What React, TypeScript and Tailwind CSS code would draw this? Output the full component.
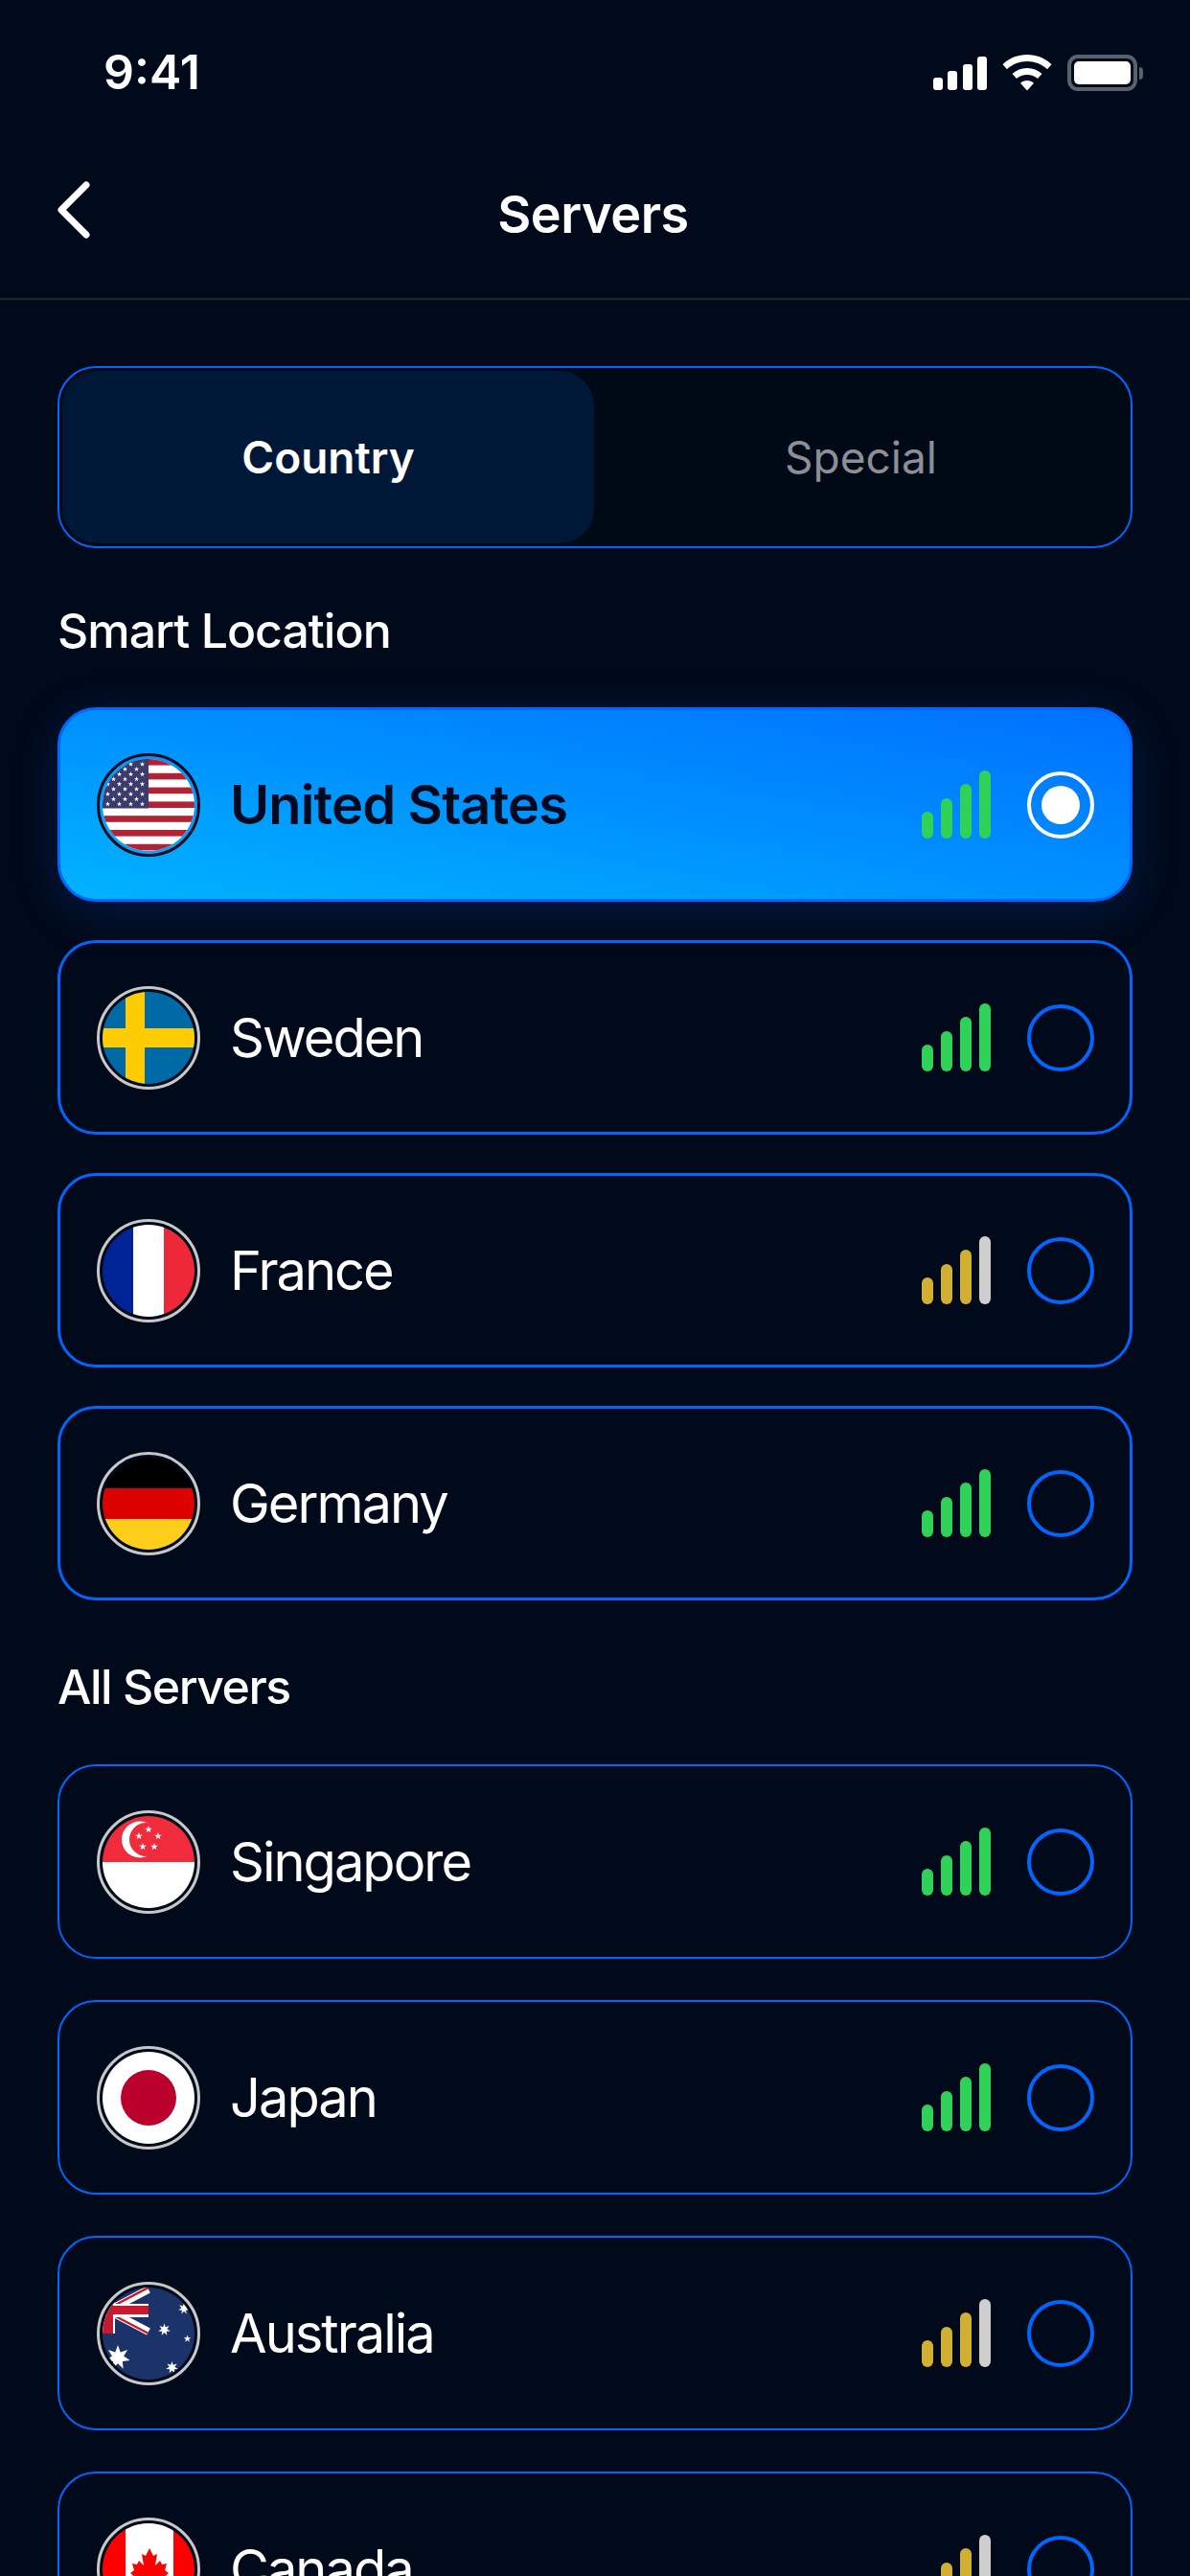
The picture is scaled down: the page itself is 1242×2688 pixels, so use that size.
import React from 'react';

const star = (cx: number, cy: number, r: number, points = 5, inner = 0.4) => {
  const out: string[] = [];
  for (let i = 0; i < points * 2; i++) {
    const rad = i % 2 === 0 ? r : r * inner;
    const a = (Math.PI * i) / points - Math.PI / 2;
    out.push(`${(cx + rad * Math.cos(a)).toFixed(2)},${(cy + rad * Math.sin(a)).toFixed(2)}`);
  }
  return out.join(' ');
};

const UsFlag = () => {
  const stripes = Array.from({ length: 13 }, (_, i) => i);
  const stars: [number, number][] = [];
  for (let row = 0; row < 9; row++) {
    const count = row % 2 === 0 ? 4 : 3;
    for (let col = 0; col < count; col++) {
      stars.push([(row % 2 === 0 ? 5.5 : 11.5) + col * 12, 5.4 + row * 5.2]);
    }
  }
  return (
    <svg viewBox="0 0 96 96" className="w-full h-full">
      <rect width="96" height="96" fill="#fff" />
      {stripes.map((i) =>
        i % 2 === 0 ? <rect key={i} x="0" y={i * 7.4} width="96" height="6.6" fill="#b22234" /> : null
      )}
      <rect width="48" height="51.5" fill="#3c3b6e" />
      {stars.map(([x, y], i) => (
        <polygon key={i} points={star(x, y, 2.7)} fill="#fff" />
      ))}
    </svg>
  );
};

const SwedenFlag = () => (
  <svg viewBox="0 0 96 96" className="w-full h-full">
    <rect width="96" height="96" fill="#006aa7" />
    <rect x="24" width="20" height="96" fill="#fecc00" />
    <rect y="38" width="96" height="20" fill="#fecc00" />
  </svg>
);

const FranceFlag = () => (
  <svg viewBox="0 0 96 96" className="w-full h-full">
    <rect width="32" height="96" fill="#002395" />
    <rect x="32" width="32" height="96" fill="#fff" />
    <rect x="64" width="32" height="96" fill="#ed2939" />
  </svg>
);

const GermanyFlag = () => (
  <svg viewBox="0 0 96 96" className="w-full h-full">
    <rect width="96" height="32" fill="#000" />
    <rect y="32" width="96" height="32" fill="#dd0000" />
    <rect y="64" width="96" height="32" fill="#ffce1a" />
  </svg>
);

const SingaporeFlag = () => (
  <svg viewBox="0 0 96 96" className="w-full h-full">
    <rect width="96" height="48" fill="#ef2b3c" />
    <rect y="48" width="96" height="48" fill="#fff" />
    <circle cx="39" cy="24.5" r="19" fill="#fff" />
    <circle cx="45.5" cy="24.5" r="17.5" fill="#ef2b3c" />
    <polygon points={star(48, 14, 4)} fill="#fff" />
    <polygon points={star(38, 21, 4)} fill="#fff" />
    <polygon points={star(58, 21, 4)} fill="#fff" />
    <polygon points={star(42, 32, 4)} fill="#fff" />
    <polygon points={star(54, 32, 4)} fill="#fff" />
  </svg>
);

const JapanFlag = () => (
  <svg viewBox="0 0 96 96" className="w-full h-full">
    <rect width="96" height="96" fill="#fff" />
    <circle cx="48" cy="48" r="29" fill="#bc002d" />
  </svg>
);

const AustraliaFlag = () => (
  <svg viewBox="0 0 96 96" className="w-full h-full">
    <rect width="96" height="96" fill="#1b3369" />
    {/* canton is cropped by the circle, the cross sits near the left edge */}
    <path d="M6 24 L48 2 M6 24 L48 46" stroke="#fff" strokeWidth="8" />
    <path d="M6 22 L48 0 M6 26 L48 48" stroke="#c8192e" strokeWidth="2.5" />
    <rect x="0" y="0" width="13" height="48" fill="#fff" />
    <rect x="0" y="17" width="48" height="14" fill="#fff" />
    <rect x="0" y="0" width="11" height="48" fill="#c8192e" />
    <rect x="0" y="19" width="48" height="9" fill="#c8192e" />
    <polygon points={star(16, 73, 13, 7, 0.48)} fill="#fff" />
    <polygon points={star(64.5, 44, 6.5, 7, 0.45)} fill="#fff" />
    <polygon points={star(85, 22, 6, 7, 0.45)} fill="#fff" />
    <polygon points={star(88.5, 53.5, 4, 5)} fill="#fff" />
    <polygon points={star(72.5, 83.5, 6.5, 7, 0.45)} fill="#fff" />
  </svg>
);

const CanadaFlag = () => (
  <svg viewBox="0 0 96 96" className="w-full h-full">
    <rect width="96" height="96" fill="#ff0000" />
    <rect x="24" width="50" height="96" fill="#fff" />
    <path
      d="M49 26 L53 34 L57 32 L55 44 L60 39 L62 43 L67 42 L65 49 L69 52 L60 60 L62 65 L50 63 L50 72 L48 72 L48 63 L36 65 L38 60 L29 52 L33 49 L31 42 L36 43 L38 39 L43 44 L41 32 L45 34 Z"
      fill="#ff0000"
    />
  </svg>
);

const SignalBars = ({ tone }: { tone: 'good' | 'fair' }) => {
  const heights = ['h-[28px]', 'h-[42px]', 'h-[57px]', 'h-[71px]'];
  return (
    <div className="flex items-end gap-[8px]">
      {heights.map((h, i) => (
        <div
          key={h}
          className={`w-[12px] rounded-full ${h} ${
            tone === 'good' ? 'bg-[#30d158]' : i === 3 ? 'bg-[#cfcfcf]' : 'bg-[#d0af33]'
          }`}
        />
      ))}
    </div>
  );
};

interface ServerRowProps {
  name: string;
  flag: React.ReactNode;
  tone: 'good' | 'fair';
  selected?: boolean;
  thin?: boolean;
}

const ServerRow: React.FC<ServerRowProps> = ({ name, flag, tone, selected, thin }) => (
  <div
    className={`flex items-center h-[203px] shrink-0 rounded-[40px] border-[#0066ff] ${
      thin ? 'border-2 pl-[39px] pr-[38px]' : 'border-[3px] pl-[38px] pr-[37px]'
    } ${
      selected
        ? 'bg-gradient-to-tr from-[#00b4ff] via-[#0090ff] to-[#0070ff] shadow-[0_10px_50px_rgba(0,90,255,0.2)]'
        : ''
    }`}
  >
    <div
      className={`w-[108px] h-[108px] shrink-0 rounded-full border-[3px] p-[3px] ${
        selected ? 'border-[#000a1c]' : 'border-[#c8c8c8]'
      }`}
    >
      <div className="w-full h-full rounded-full overflow-hidden">{flag}</div>
    </div>
    <span
      className={`ml-[31px] flex-1 text-[56px] leading-none ${
        selected ? 'font-semibold tracking-[-0.85px] text-[#000a1e]' : 'font-normal tracking-[-2px] text-white'
      }`}
    >
      {name}
    </span>
    <SignalBars tone={tone} />
    <div
      className={`ml-[38px] w-[70px] h-[70px] rounded-full border-[4px] flex items-center justify-center ${
        selected ? 'border-white' : 'border-[#0066ff]'
      }`}
    >
      {selected && <div className="w-[40px] h-[40px] rounded-full bg-white" />}
    </div>
  </div>
);

const StatusBar = () => (
  <div className="h-[150px] flex items-start justify-between pt-[52px] pl-[108px] pr-[49px]">
    <span className="text-[50px] leading-[46px] font-semibold text-white">9:41</span>
    <div className="flex items-center gap-[16px] mt-[5px]">
      <div className="flex items-end gap-[5.5px] h-[35px]">
        <div className="w-[10px] h-[13px] rounded-[3px] bg-white" />
        <div className="w-[10px] h-[20px] rounded-[3px] bg-white" />
        <div className="w-[10px] h-[27px] rounded-[3px] bg-white" />
        <div className="w-[10px] h-[35px] rounded-[3px] bg-white" />
      </div>
      <svg width="52" height="38" viewBox="0 0 52 38" fill="#fff">
        <path d="M26 0 C35.5 0 44.5 3.6 51.5 10.2 L47 15.2 C41.2 9.9 33.8 7 26 7 C18.2 7 10.8 9.9 5 15.2 L0.5 10.2 C7.5 3.6 16.5 0 26 0 Z" />
        <path d="M26 14 C31.8 14 37.2 16.1 41.5 20 L37 25 C33.9 22.4 30 21 26 21 C22 21 18.1 22.4 15 25 L10.5 20 C14.8 16.1 20.2 14 26 14 Z" />
        <path d="M26 27 C28.8 27 31 28 33 29.8 L26 37.5 L19 29.8 C21 28 23.2 27 26 27 Z" />
      </svg>
      <div className="flex items-center gap-[2px]">
        <div className="w-[73px] h-[38px] rounded-[11px] border-[4px] border-[#5a616c] p-[3px]">
          <div className="w-full h-full rounded-[5px] bg-white" />
        </div>
        <div className="w-[4px] h-[13px] rounded-r-full bg-[#5a616c]" />
      </div>
    </div>
  </div>
);

const App = () => {
  return (
    <div className="w-[1242px] h-[2688px] overflow-hidden bg-[#000a1a] font-['Inter',sans-serif] text-white">
      <StatusBar />

      {/* Nav */}
      <div className="relative h-[163px] flex items-center justify-center pb-[14px] pr-[4px] border-b-2 border-[#1f2733]">
        <svg
          width="40"
          height="64"
          viewBox="0 0 40 64"
          fill="none"
          stroke="#fff"
          strokeWidth="7"
          strokeLinecap="round"
          strokeLinejoin="round"
          className="absolute left-[58px] top-[37px]"
        >
          <path d="M32 6 L6 32 L32 58" />
        </svg>
        <h1 className="text-[54px] leading-none font-semibold tracking-[-0.5px]">Servers</h1>
      </div>

      <div className="flex flex-col px-[60px] pt-[69px]">
        {/* Tabs */}
        <div className="flex h-[190px] shrink-0 rounded-[40px] border-2 border-[#0066ff] p-[3px] bg-[#000916]">
          <div className="w-[555px] rounded-[36px] bg-[#001838] flex items-center justify-center text-[46px] font-semibold">
            Country
          </div>
          <div className="flex-1 flex items-center justify-center text-[46px] font-normal text-[#8c8f96]">
            Special
          </div>
        </div>

        <h2 className="mt-[56px] mb-[50px] text-[50px] leading-[60px] font-medium tracking-[-1px]">
          Smart Location
        </h2>
        <div className="flex flex-col gap-[40px]">
          <ServerRow name="United States" flag={<UsFlag />} tone="good" selected />
          <ServerRow name="Sweden" flag={<SwedenFlag />} tone="good" />
          <ServerRow name="France" flag={<FranceFlag />} tone="fair" />
          <ServerRow name="Germany" flag={<GermanyFlag />} tone="good" />
        </div>

        <h2 className="mt-[60px] mb-[51px] text-[50px] leading-[60px] font-medium tracking-[-1.5px]">
          All Servers
        </h2>
        <div className="flex flex-col gap-[43px]">
          <ServerRow name="Singapore" flag={<SingaporeFlag />} tone="good" thin />
          <ServerRow name="Japan" flag={<JapanFlag />} tone="good" thin />
          <ServerRow name="Australia" flag={<AustraliaFlag />} tone="fair" thin />
          <ServerRow name="Canada" flag={<CanadaFlag />} tone="fair" thin />
        </div>
      </div>
    </div>
  );
};

export default App;
